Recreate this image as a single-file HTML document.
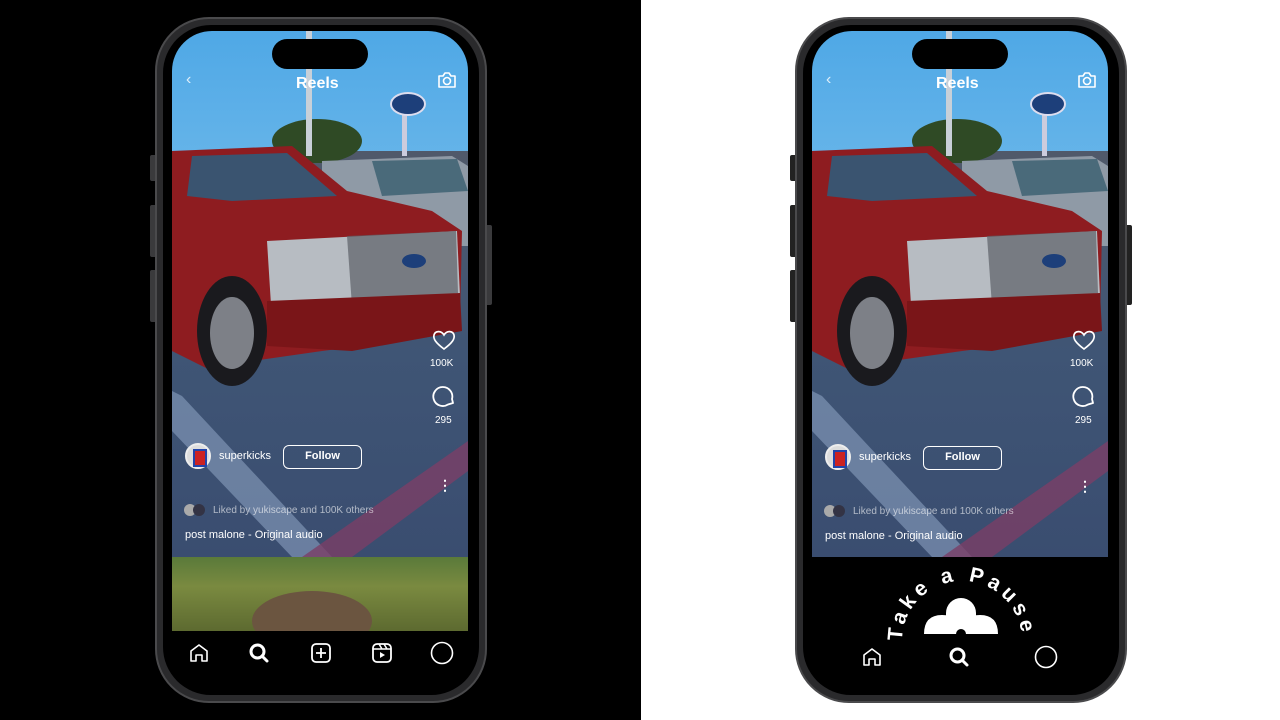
<!DOCTYPE html>
<html><head><meta charset="utf-8"><style>
*{margin:0;padding:0;box-sizing:border-box}
body{width:1280px;height:720px;position:relative;overflow:hidden;font-family:"Liberation Sans",sans-serif;background:#fff}
.left{position:absolute;left:0;top:0;width:641px;height:720px;background:#000}
.ph{position:absolute;top:17px;width:332px;height:686px;border-radius:54px;background:#2a2a2c;border:2px solid #4a4a4c}
.ph .in{position:absolute;left:6px;top:6px;right:6px;bottom:6px;border-radius:48px;background:#000}
.scr{position:absolute;top:31px;width:296px;height:659px;border-radius:40px;overflow:hidden;background:#000}
.photo{position:absolute;left:0;top:0;width:296px;height:526px}
.island{position:absolute;left:100px;top:8px;width:96px;height:30px;border-radius:15px;background:#000}
.t{position:absolute;color:#fff;white-space:nowrap}
.btn{position:absolute;border:1.5px solid #fff;border-radius:6px;color:#fff;font-weight:bold;font-size:11px;text-align:center;line-height:20px}
.av{position:absolute;width:26px;height:26px;border-radius:50%;background:#ddd;border:2px solid #eee}
.av::after{content:"";position:absolute;left:6px;top:4px;width:10px;height:14px;background:#c22;border:2px solid #24a}
.btn2{position:absolute;width:8px;border-radius:2px;background:#3a3a3c}
</style></head><body>
<div class="left"></div>

<svg width="0" height="0" style="position:absolute">
<defs>
<linearGradient id="sky" x1="0" y1="0" x2="0" y2="1"><stop offset="0" stop-color="#4fa8e6"/><stop offset="1" stop-color="#a9d9f2"/></linearGradient>
<linearGradient id="gr" x1="0" y1="0" x2="0" y2="1"><stop offset="0" stop-color="#50596a"/><stop offset="0.5" stop-color="#3f5575"/><stop offset="1" stop-color="#3a4d70"/></linearGradient>
<g id="pic">
<rect width="296" height="526" fill="url(#sky)"/>
<rect x="0" y="120" width="296" height="406" fill="url(#gr)"/>
<ellipse cx="145" cy="110" rx="45" ry="22" fill="#2f4a25"/>
<rect x="134" y="0" width="6" height="125" fill="#c8d0d8"/>
<rect x="230" y="75" width="5" height="50" fill="#ccd"/>
<ellipse cx="236" cy="73" rx="17" ry="11" fill="#1d3f7a" stroke="#dde" stroke-width="2"/>
<path d="M150 130 L280 125 L296 135 L296 215 L150 215Z" fill="#8f9aa6"/>
<path d="M200 130 L285 128 L296 160 L210 165Z" fill="#4a6a7a"/>
<path d="M0 120 L120 115 L175 160 L260 180 L290 200 L288 290 L230 310 L150 320 L80 330 L40 340 L0 320Z" fill="#8e1c20"/>
<path d="M20 125 L115 122 L165 165 L60 170 L15 165Z" fill="#3a5470"/>
<path d="M95 210 L285 200 L288 265 L180 285 L100 290Z" fill="#b7bcc2"/>
<path d="M175 205 L284 200 L286 262 L180 275Z" fill="#5b5f66" opacity=".7"/>
<ellipse cx="242" cy="230" rx="12" ry="7" fill="#1d3f7a"/>
<path d="M95 270 L288 262 L290 300 L180 320 L95 315Z" fill="#7a1518"/>
<ellipse cx="60" cy="300" rx="35" ry="55" fill="#1a1a1e"/>
<ellipse cx="60" cy="302" rx="22" ry="36" fill="#7d8087"/>
<path d="M0 360 L10 365 L160 526 L120 526 L0 400Z" fill="#8aa0c0" opacity=".6"/>
<path d="M296 410 L296 440 L180 526 L130 526Z" fill="#7a3f66" opacity=".8"/>
</g>
</defs>
</svg>

<!-- LEFT PHONE -->
<div class="btn2" style="left:150px;top:155px;height:26px"></div>
<div class="btn2" style="left:150px;top:205px;height:52px"></div>
<div class="btn2" style="left:150px;top:270px;height:52px"></div>
<div class="btn2" style="left:484px;top:225px;height:80px"></div>
<div class="ph" style="left:155px"><div class="in"></div></div>
<div class="scr" style="left:172px">
 <svg class="photo" viewBox="0 0 296 526"><use href="#pic"/></svg>
 <div style="position:absolute;left:0;top:526px;width:296px;height:74px;background:linear-gradient(#5a7a3a,#7a8a40 40%,#5d6a30)"></div>
 <div style="position:absolute;left:80px;top:560px;width:120px;height:60px;border-radius:50%;background:#6b5540"></div>
 <div style="position:absolute;left:0;top:600px;width:296px;height:60px;background:#000"></div>
 <div class="island"></div>
 <div class="t" style="left:14px;top:40px;font-size:16px;opacity:.8">‹</div>
 <div class="t" style="left:124px;top:44px;font-size:16px;font-weight:bold">Reels</div>
 <svg style="position:absolute;left:265px;top:40px" width="20" height="18" viewBox="0 0 20 18"><path d="M2 5h4l2-3h4l2 3h4v11H2z" fill="none" stroke="#fff" stroke-width="1.6" stroke-linejoin="round"/><circle cx="10" cy="10" r="3.5" fill="none" stroke="#fff" stroke-width="1.6"/></svg>
 <svg style="position:absolute;left:260px;top:298px" width="24" height="22" viewBox="0 0 24 22"><path d="M12 20 C4 14 1 10 2 6 C3 2 9 1 12 6 C15 1 21 2 22 6 C23 10 20 14 12 20Z" fill="none" stroke="#fff" stroke-width="1.7"/></svg>
 <div class="t" style="left:258px;top:327px;font-size:10px">100K</div>
 <svg style="position:absolute;left:260px;top:353px" width="24" height="24" viewBox="0 0 24 24"><path d="M21 19 L20 15 A9.5 9.5 0 1 0 16 20.5 Z" fill="none" stroke="#fff" stroke-width="1.8" stroke-linejoin="round"/></svg>
 <div class="t" style="left:263px;top:384px;font-size:10px">295</div>
 <div class="av" style="left:13px;top:412px"></div>
 <div class="t" style="left:47px;top:419px;font-size:11px">superkicks</div>
 <div class="btn" style="left:111px;top:414px;width:79px;height:24px">Follow</div>
 <div class="t" style="left:266px;top:446px;font-size:14px;font-weight:bold">⋮</div>
 <div style="position:absolute;left:12px;top:473px;width:12px;height:12px;border-radius:50%;background:#aaa"></div>
 <div style="position:absolute;left:21px;top:473px;width:12px;height:12px;border-radius:50%;background:#334"></div>
 <div class="t" style="left:41px;top:474px;font-size:10px;opacity:.6">Liked by yukiscape and 100K others</div>
 <div class="t" style="left:13px;top:498px;font-size:11px">post malone - Original audio</div>
 <svg style="position:absolute;left:16px;top:611px" width="22" height="22" viewBox="0 0 22 22"><path d="M3 19V9l8-6 8 6v10h-5v-6h-6v6z" fill="none" stroke="#fff" stroke-width="1.6" stroke-linejoin="round"/></svg>
 <svg style="position:absolute;left:76px;top:611px" width="22" height="22" viewBox="0 0 22 22"><circle cx="9.5" cy="9.5" r="6.5" fill="none" stroke="#fff" stroke-width="3"/><path d="M14 14l5 5" stroke="#fff" stroke-width="3" stroke-linecap="round"/></svg>
 <svg style="position:absolute;left:138px;top:611px" width="22" height="22" viewBox="0 0 22 22"><rect x="2" y="2" width="18" height="18" rx="4" fill="none" stroke="#fff" stroke-width="1.8"/><path d="M11 6v10M6 11h10" stroke="#fff" stroke-width="1.8"/></svg>
 <svg style="position:absolute;left:199px;top:611px" width="22" height="22" viewBox="0 0 22 22"><rect x="2" y="2" width="18" height="18" rx="4" fill="none" stroke="#fff" stroke-width="1.8"/><path d="M2 7h18M8 2l3 5M13 2l3 5" stroke="#fff" stroke-width="1.5"/><path d="M9 10v6l5-3z" fill="#fff"/></svg>
 <svg style="position:absolute;left:258px;top:610px" width="24" height="24" viewBox="0 0 24 24"><circle cx="12" cy="12" r="10.5" fill="none" stroke="#fff" stroke-width="1.6"/></svg>
</div>

<!-- RIGHT PHONE -->
<div class="btn2" style="left:790px;top:155px;height:26px;background:#222"></div>
<div class="btn2" style="left:790px;top:205px;height:52px;background:#222"></div>
<div class="btn2" style="left:790px;top:270px;height:52px;background:#222"></div>
<div class="btn2" style="left:1124px;top:225px;height:80px;background:#222"></div>
<div class="ph" style="left:795px"><div class="in"></div></div>
<div class="scr" style="left:812px">
 <svg class="photo" viewBox="0 0 296 526"><use href="#pic"/></svg>
 <div class="island"></div>
 <div class="t" style="left:14px;top:40px;font-size:16px;opacity:.8">‹</div>
 <div class="t" style="left:124px;top:44px;font-size:16px;font-weight:bold">Reels</div>
 <svg style="position:absolute;left:265px;top:40px" width="20" height="18" viewBox="0 0 20 18"><path d="M2 5h4l2-3h4l2 3h4v11H2z" fill="none" stroke="#fff" stroke-width="1.6" stroke-linejoin="round"/><circle cx="10" cy="10" r="3.5" fill="none" stroke="#fff" stroke-width="1.6"/></svg>
 <svg style="position:absolute;left:260px;top:298px" width="24" height="22" viewBox="0 0 24 22"><path d="M12 20 C4 14 1 10 2 6 C3 2 9 1 12 6 C15 1 21 2 22 6 C23 10 20 14 12 20Z" fill="none" stroke="#fff" stroke-width="1.7"/></svg>
 <div class="t" style="left:258px;top:327px;font-size:10px">100K</div>
 <svg style="position:absolute;left:260px;top:353px" width="24" height="24" viewBox="0 0 24 24"><path d="M21 19 L20 15 A9.5 9.5 0 1 0 16 20.5 Z" fill="none" stroke="#fff" stroke-width="1.8" stroke-linejoin="round"/></svg>
 <div class="t" style="left:263px;top:384px;font-size:10px">295</div>
 <div class="av" style="left:13px;top:413px"></div>
 <div class="t" style="left:47px;top:420px;font-size:11px">superkicks</div>
 <div class="btn" style="left:111px;top:415px;width:79px;height:24px">Follow</div>
 <div class="t" style="left:266px;top:447px;font-size:14px;font-weight:bold">⋮</div>
 <div style="position:absolute;left:12px;top:474px;width:12px;height:12px;border-radius:50%;background:#aaa"></div>
 <div style="position:absolute;left:21px;top:474px;width:12px;height:12px;border-radius:50%;background:#334"></div>
 <div class="t" style="left:41px;top:475px;font-size:10px;opacity:.6">Liked by yukiscape and 100K others</div>
 <div class="t" style="left:13px;top:499px;font-size:11px">post malone - Original audio</div>
 <svg style="position:absolute;left:60px;top:526px" width="180" height="90" viewBox="0 0 180 90">
  <defs><path id="arc" d="M30 84 A60 60 0 0 1 150 84"/></defs>
  <text font-family="Liberation Sans, sans-serif" font-weight="bold" font-size="21" fill="#fff"><textPath href="#arc" textLength="180" lengthAdjust="spacing">Take a Pause</textPath></text>
  <path d="M52 77 Q52 58 70 58 Q88 58 88 77Z M90 77 Q90 58 108 58 Q126 58 126 77Z" fill="#fff"/>
  <circle cx="89" cy="56" r="15" fill="#fff"/>
  <rect x="74" y="56" width="30" height="21" fill="#fff"/>
  <circle cx="89" cy="77" r="5" fill="#000"/>
 </svg>
 <svg style="position:absolute;left:49px;top:615px" width="22" height="22" viewBox="0 0 22 22"><path d="M3 19V9l8-6 8 6v10h-5v-6h-6v6z" fill="none" stroke="#fff" stroke-width="1.6" stroke-linejoin="round"/></svg>
 <svg style="position:absolute;left:136px;top:615px" width="22" height="22" viewBox="0 0 22 22"><circle cx="9.5" cy="9.5" r="6.5" fill="none" stroke="#fff" stroke-width="3"/><path d="M14 14l5 5" stroke="#fff" stroke-width="3" stroke-linecap="round"/></svg>
 <svg style="position:absolute;left:222px;top:614px" width="24" height="24" viewBox="0 0 24 24"><circle cx="12" cy="12" r="10.5" fill="none" stroke="#fff" stroke-width="1.6"/></svg>
</div>
</body></html>
